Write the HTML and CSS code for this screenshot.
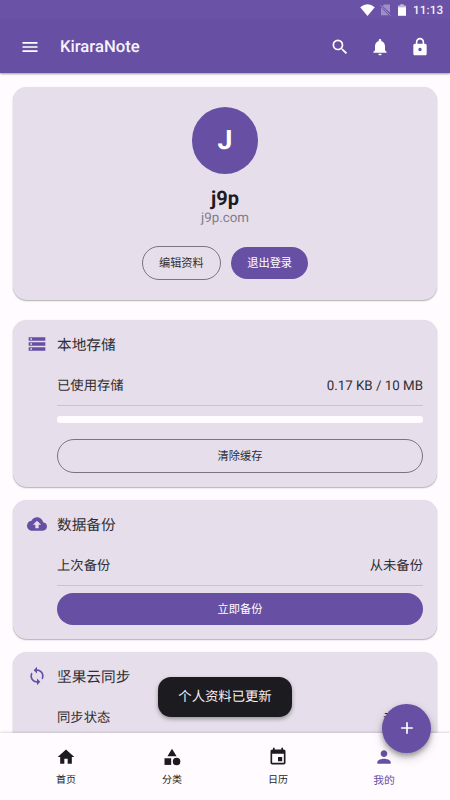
FILE: index.html
```html
<!DOCTYPE html>
<html lang="zh-CN">
<head>
<meta charset="utf-8">
<meta name="viewport" content="width=device-width, initial-scale=1">
<title>KiraraNote</title>
<link rel="stylesheet" href="styles.css">
</head>
<body>
<div class="app">
  <div class="status-bar">
    <svg class="wifi" viewBox="0 0 15 12"><path d="M.2 3.2Q7.500-2.600 14.800 3.200L7.500 12z"/></svg>
    <svg class="sim" viewBox="0 0 11 12"><path d="M4 .5h6v8.200L2.600 1.900zM1 3.200 8.600 11.300H1z"/><path d="M.5 1.200 10.500 11.700" class="slash"/></svg>
    <svg class="battery" viewBox="0 0 8 12"><path class="dim" d="M0 1.400h2.300V.2h3.400v1.200H8V4H0z"/><path d="M0 3.400h8v8.400H0z"/></svg>
    <span class="clock">11:13</span>
  </div>
  <header class="app-bar">
    <svg class="icon" viewBox="0 0 24 24"><path d="M3 18h18v-2H3v2zm0-5h18v-2H3v2zm0-7v2h18V6H3z"/></svg>
    <h1>KiraraNote</h1>
    <div class="actions">
      <svg class="icon" viewBox="0 0 24 24"><path d="M15.500 14h-.79l-.28-.27A6.470 6.470 0 0 0 16 9.500 6.500 6.500 0 1 0 9.500 16c1.610 0 3.090-.59 4.230-1.570l.27.28v.79l5 4.990L20.490 19l-4.990-5zm-6 0C7.010 14 5 11.990 5 9.500S7.010 5 9.500 5 14 7.010 14 9.500 11.990 14 9.500 14z"/></svg>
      <svg class="icon" viewBox="0 0 24 24"><path d="M12 22c1.100 0 2-.9 2-2h-4c0 1.100.89 2 2 2zm6-6v-5c0-3.070-1.640-5.640-4.500-6.320V4c0-.83-.67-1.500-1.500-1.500s-1.500.67-1.500 1.500v.68C7.630 5.360 6 7.920 6 11v5l-2 2v1h16v-1l-2-2z"/></svg>
      <svg class="icon" viewBox="0 0 24 24"><path d="M18 8h-1V6c0-2.760-2.240-5-5-5S7 3.240 7 6v2H6c-1.100 0-2 .9-2 2v10c0 1.100.9 2 2 2h12c1.100 0 2-.9 2-2V10c0-1.100-.9-2-2-2zm-6 9c-1.100 0-2-.9-2-2s.9-2 2-2 2 .9 2 2-.9 2-2 2zm3.100-9H8.900V6c0-1.710 1.390-3.100 3.100-3.100s3.100 1.390 3.100 3.100v2z"/></svg>
    </div>
  </header>

  <main class="content">
    <section class="card profile">
      <div class="avatar">J</div>
      <h2>j9p</h2>
      <p class="site">j9p.com</p>
      <div class="buttons">
        <button class="btn outlined">编辑资料</button>
        <button class="btn filled">退出登录</button>
      </div>
    </section>

    <section class="card storage">
      <div class="card-title">
        <svg class="icon" viewBox="0 0 24 24"><path d="M2 20h20v-4H2v4zm2-3h2v2H4v-2zM2 4v4h20V4H2zm4 3H4V5h2v2zm-4 7h20v-4H2v4zm2-3h2v2H4v-2z"/></svg>
        <h3>本地存储</h3>
      </div>
      <div class="card-body">
        <div class="row"><span>已使用存储</span><span>0.17 KB / 10 MB</span></div>
        <div class="meter"></div>
        <button class="btn outlined">清除缓存</button>
      </div>
    </section>

    <section class="card backup">
      <div class="card-title">
        <svg class="icon" viewBox="0 0 24 24"><path d="M19.350 10.040C18.670 6.590 15.640 4 12 4 9.110 4 6.600 5.640 5.350 8.040 2.340 8.360 0 10.910 0 14c0 3.310 2.690 6 6 6h13c2.760 0 5-2.240 5-5 0-2.640-2.050-4.780-4.650-4.960zM14 13v4h-4v-4H7l5-5 5 5h-3z"/></svg>
        <h3>数据备份</h3>
      </div>
      <div class="card-body">
        <div class="row"><span>上次备份</span><span>从未备份</span></div>
        <button class="btn filled">立即备份</button>
      </div>
    </section>

    <section class="card sync">
      <div class="card-title">
        <svg class="icon" viewBox="0 0 24 24"><path d="M12 4V1L8 5l4 4V6c3.310 0 6 2.690 6 6 0 1.010-.25 1.970-.7 2.800l1.460 1.460A7.930 7.930 0 0 0 20 12c0-4.420-3.580-8-8-8zm0 14c-3.310 0-6-2.690-6-6 0-1.010.25-1.970.7-2.800L5.240 7.740A7.930 7.930 0 0 0 4 12c0 4.420 3.580 8 8 8v3l4-4-4-4v3z"/></svg>
        <h3>坚果云同步</h3>
      </div>
      <div class="card-body">
        <div class="row"><span>同步状态</span><span>未配置</span></div>
      </div>
    </section>
  </main>

  <nav class="bottom-nav">
    <a class="tab"><svg class="icon" viewBox="0 0 24 24"><path d="M10 20v-6h4v6h5v-8h3L12 3 2 12h3v8z"/></svg><span>首页</span></a>
    <a class="tab"><svg class="icon" viewBox="0 0 24 24"><path d="m12 2-5.500 9h11z"/><circle cx="17.500" cy="17.500" r="4.500"/><path d="M3 13.500h8v8H3z"/></svg><span>分类</span></a>
    <a class="tab"><svg class="icon" viewBox="0 0 24 24"><path d="M17 12h-5v5h5v-5zM16 1v2H8V1H6v2H5c-1.110 0-1.990.9-1.990 2L3 19c0 1.100.89 2 2 2h14c1.100 0 2-.9 2-2V5c0-1.100-.9-2-2-2h-1V1h-2zm3 18H5V8h14v11z"/></svg><span>日历</span></a>
    <a class="tab active"><svg class="icon" viewBox="0 0 24 24"><path d="M12 12c2.210 0 4-1.790 4-4s-1.790-4-4-4-4 1.790-4 4 1.790 4 4 4zm0 2c-2.670 0-8 1.340-8 4v2h16v-2c0-2.660-5.330-4-8-4z"/></svg><span>我的</span></a>
  </nav>

  <div class="toast">个人资料已更新</div>
  <button class="fab" aria-label="+"><svg class="icon" viewBox="0 0 24 24"><path d="M19 13h-6v6h-2v-6H5v-2h6V5h2v6h6v2z"/></svg></button>
</div>
</body>
</html>
```
FILE: styles.css
```css
:root {
  --primary: #6750a4;
  --surface: #fffbfe;
  --card: #e6dfeb;
  --text: #1c1b1f;
  --text-soft: #302e33;
  --outline: #79747e;
}

* { box-sizing: border-box; }

body {
  margin: 0;
  background: var(--surface);
  color: var(--text);
  font-family: Roboto, "Noto Sans CJK SC", sans-serif;
  font-size: 13.333px;
  text-rendering: geometricPrecision;
}

h1, h2, h3, p { margin: 0; font-weight: 400; }

.app {
  position: relative;
  display: flex;
  flex-direction: column;
  height: 800px;
  overflow: hidden;
}

.icon {
  display: block;
  flex: none;
  width: 20px;
  height: 20px;
  fill: currentColor;
}

.status-bar {
  flex: none;
  display: flex;
  justify-content: flex-end;
  align-items: center;
  height: 20px;
  padding-right: 7px;
  background: #6a53a6;
  color: #f3f0f8;
}
.status-bar svg { fill: #fff; height: 12px; margin-top: -1px; }
.status-bar .wifi { width: 15px; margin-right: 5px; }
.status-bar .sim { width: 11px; margin-right: 7px; opacity: .35; }
.slash { stroke: #fff; stroke-width: 1; }
.status-bar .battery { width: 8px; margin-right: 7px; }
.battery .dim { opacity: .6; }
.clock { width: 30px; font-size: 11.700px; font-weight: 500; letter-spacing: .1px; line-height: 20px; white-space: nowrap; }

.app-bar {
  position: relative;
  z-index: 1;
  flex: none;
  display: flex;
  align-items: center;
  height: 53px;
  padding: 0 20px;
  background: var(--primary);
  color: #fff;
  box-shadow: 0 1px 2px rgba(0, 0, 0, .4);
}
.app-bar h1 { margin-left: 20px; padding-top: 2px; font-size: 16.667px; font-weight: 500; color: #f6f2fb; }
.actions { display: flex; gap: 20px; margin-left: auto; }

.content {
  flex: 1;
  min-height: 0;
  overflow: hidden;
  padding: 14px 13px 0;
}

.card {
  margin-bottom: 13px;
  border-radius: 14px;
  background: var(--card);
  box-shadow: 0 1px 1.500px rgba(0, 0, 0, .3), 0 0 1px rgba(0, 0, 0, .1);
}
.profile {
  display: flex;
  flex-direction: column;
  align-items: center;
  height: 213px;
  margin-bottom: 20px;
  padding-top: 20px;
}
.avatar {
  width: 66.600px;
  height: 66.600px;
  border-radius: 50%;
  background: var(--primary);
  color: #fff;
  font-size: 26.667px;
  font-weight: 700;
  line-height: 67px;
  text-align: center;
}
.profile h2 { margin-top: 12.400px; font-size: 20px; font-weight: 700; line-height: 24px; }
.site { color: #817c86; margin-top: 1px; line-height: 16px; }
.buttons { display: flex; align-items: center; gap: 10px; margin-top: 19px; }

.btn {
  display: block;
  height: 32px;
  padding: 1px 16.300px 0;
  border: 0;
  border-radius: 17px;
  font: inherit;
  font-size: 11.200px;
  line-height: 31px;
  color: var(--text-soft);
}
.btn.outlined { height: 34px; border: 1px solid var(--outline); background: transparent; }
.btn.filled { background: var(--primary); color: #fff; }

.storage { height: 167px; }
.backup { height: 139px; }
.sync { height: 139px; }
.card-title { display: flex; align-items: center; gap: 10px; height: 48px; padding-left: 14px; }
.card-title .icon { color: var(--primary); }
.card-title h3 { font-size: 14.667px; color: var(--text-soft); }
.card-body { padding: 0 14px 0 44px; }
.row {
  display: flex;
  justify-content: space-between;
  height: 38px;
  border-bottom: 1px solid #cac4d0;
  color: var(--text-soft);
  line-height: 37px;
}
.meter { height: 7px; margin-top: 10px; border-radius: 3px; background: var(--surface); }
.card-body .btn { width: 100%; margin-top: 6.500px; }
.card-body .btn.outlined { margin-top: 16px; }

.bottom-nav {
  position: relative;
  z-index: 1;
  flex: none;
  display: flex;
  height: 67px;
  padding: 0 13px;
  background: var(--surface);
  box-shadow: 0 -1px 2px rgba(0, 0, 0, .14);
}
.tab {
  flex: 1;
  display: flex;
  flex-direction: column;
  align-items: center;
  padding-top: 14px;
  color: var(--text);
  font-size: 10px;
  line-height: 14px;
}
.tab span { margin-top: 7px; }
.tab.active { color: var(--primary); font-size: 10.800px; }

.toast {
  position: absolute;
  z-index: 2;
  left: 158px;
  top: 677px;
  width: 134px;
  height: 40px;
  border-radius: 13px;
  background: var(--text);
  color: #f4eff4;
  line-height: 42px;
  text-align: center;
  box-shadow: 0 2px 4px rgba(0, 0, 0, .35);
}

.fab {
  position: absolute;
  z-index: 2;
  right: 19px;
  bottom: 47.500px;
  display: flex;
  align-items: center;
  justify-content: center;
  width: 49px;
  height: 49px;
  padding: 0;
  border: 0;
  border-radius: 50%;
  background: var(--primary);
  color: #fff;
  box-shadow: 0 3px 5px rgba(0, 0, 0, .3), 0 5px 12px rgba(0, 0, 0, .16);
}
```
